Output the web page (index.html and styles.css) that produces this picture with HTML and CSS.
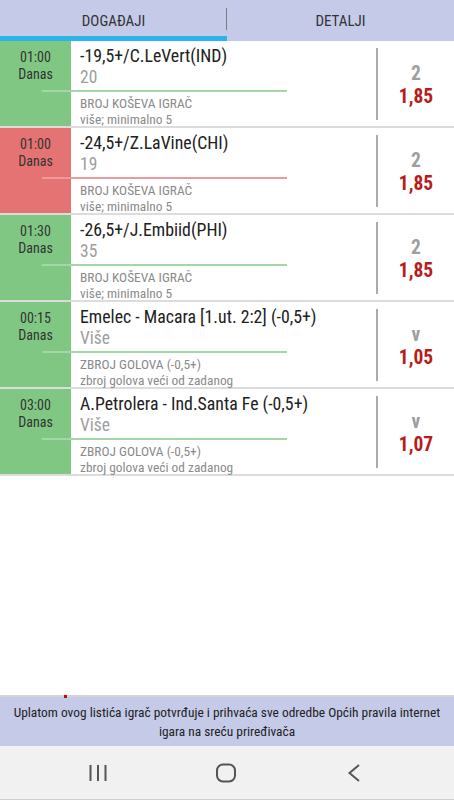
FILE: index.html
```html
<!DOCTYPE html>
<html lang="hr">
<head>
    <meta charset="UTF-8">
    <meta name="viewport" content="width=device-width, initial-scale=1.0">
    <title>Listić</title>
    <link rel="stylesheet" href="styles.css">
</head>
<body>
    <div class="tabs">
        <div class="tab active">DOGAĐAJI</div>
        <div class="tab">DETALJI</div>
    </div>

    <div class="list">
        <div class="row win">
            <div class="time">01:00<br>Danas</div>
            <div class="info">
                <div class="title">-19,5+/C.LeVert(IND)</div>
                <div class="pick">20</div>
                <div class="rule"></div>
                <div class="market">BROJ KOŠEVA IGRAČ</div>
                <div class="desc">više; minimalno 5</div>
            </div>
            <div class="odds"><span class="tip">2</span><span class="quota">1,85</span></div>
        </div>

        <div class="row lose">
            <div class="time">01:00<br>Danas</div>
            <div class="info">
                <div class="title">-24,5+/Z.LaVine(CHI)</div>
                <div class="pick">19</div>
                <div class="rule"></div>
                <div class="market">BROJ KOŠEVA IGRAČ</div>
                <div class="desc">više; minimalno 5</div>
            </div>
            <div class="odds"><span class="tip">2</span><span class="quota">1,85</span></div>
        </div>

        <div class="row win">
            <div class="time">01:30<br>Danas</div>
            <div class="info">
                <div class="title">-26,5+/J.Embiid(PHI)</div>
                <div class="pick">35</div>
                <div class="rule"></div>
                <div class="market">BROJ KOŠEVA IGRAČ</div>
                <div class="desc">više; minimalno 5</div>
            </div>
            <div class="odds"><span class="tip">2</span><span class="quota">1,85</span></div>
        </div>

        <div class="row win">
            <div class="time">00:15<br>Danas</div>
            <div class="info">
                <div class="title">Emelec - Macara [1.ut. 2:2] (-0,5+)</div>
                <div class="pick">Više</div>
                <div class="rule"></div>
                <div class="market">ZBROJ GOLOVA (-0,5+)</div>
                <div class="desc">zbroj golova veći od zadanog</div>
            </div>
            <div class="odds"><span class="tip">v</span><span class="quota">1,05</span></div>
        </div>

        <div class="row win">
            <div class="time">03:00<br>Danas</div>
            <div class="info">
                <div class="title">A.Petrolera - Ind.Santa Fe (-0,5+)</div>
                <div class="pick">Više</div>
                <div class="rule"></div>
                <div class="market">ZBROJ GOLOVA (-0,5+)</div>
                <div class="desc">zbroj golova veći od zadanog</div>
            </div>
            <div class="odds"><span class="tip">v</span><span class="quota">1,07</span></div>
        </div>
    </div>

    <div class="notice">
        <span class="dot"></span>
        Uplatom ovog listića igrač potvrđuje i prihvaća sve odredbe Općih pravila internet igara na sreću priređivača
    </div>

    <div class="navbar">
        <svg width="34" height="20" viewBox="0 0 34 20"><path d="M9.5 2v16M17 2v16M24.5 2v16" stroke="#555" stroke-width="2" fill="none"/></svg>
        <svg width="34" height="20" viewBox="0 0 34 20"><rect x="8" y="1.5" width="18" height="17" rx="6" stroke="#555" stroke-width="2" fill="none"/></svg>
        <svg width="34" height="20" viewBox="0 0 34 20"><path d="M22 2l-9.5 8 9.5 8" stroke="#555" stroke-width="2" fill="none"/></svg>
    </div>
</body>
</html>
```

FILE: styles.css
```css
body {
    margin: 0;
    height: 800px;
    display: flex;
    flex-direction: column;
    font-family: Roboto, "Noto Sans", sans-serif;
    font-stretch: 86%;
    background: #fff;
    color: #212121;
}

.tabs {
    display: flex;
    height: 41px;
    background: #c5cae9;
}

.tab {
    flex: 1;
    text-align: center;
    font-size: 15px;
    line-height: 36px;
    padding-top: 3px;
    color: #333;
    position: relative;
}

.tab.active {
    border-bottom: 5px solid #2ab4e8;
    height: 33px;
}

/* divider between the two tabs */
.tab.active::after {
    content: "";
    position: absolute;
    right: 0;
    top: 8px;
    height: 22px;
    border-right: 1.5px solid #7a7a7a;
}

.list {
    flex: 1;
}

.row {
    display: flex;
    height: 85px;
    border-bottom: 2px solid #dcdcdc;
}

.time {
    width: 71px;
    flex-shrink: 0;
    text-align: center;
    font-size: 14px;
    line-height: 17px;
    padding-top: 8px;
    color: #333;
}

.win .time { background: #81c784; }
.lose .time { background: #e57373; }

.info {
    flex: 1;
    padding: 5px 0 0 9px;
    min-width: 0;
}

.title {
    font-size: 17.8px;
    line-height: 20px;
    white-space: nowrap;
}

.pick {
    font-size: 17.5px;
    line-height: 22px;
    color: #9e9e9e;
}

.rule {
    height: 2px;
    width: 245px;
    margin: 2px 0 0 -38px;
}

.win .rule { background: #a5d6a7; }
.lose .rule { background: #ef9a9a; }

.market,
.desc {
    font-size: 13.4px;
    line-height: 16.5px;
    color: #8a8a8a;
}

.market {
    margin-top: 3.5px;
}

.odds {
    width: 76px;
    flex-shrink: 0;
    margin: 7px 0 6px;
    border-left: 2px solid #ababab;
    padding-top: 14px;
    display: flex;
    flex-direction: column;
    align-items: center;
    font-weight: bold;
    font-size: 19.5px;
    line-height: 23px;
}

.tip { color: #9e9e9e; }
.quota { color: #b71c1c; }

.notice {
    position: relative;
    border-top: 2px solid #d4d4d4;
    background: #c5cae9;
    text-align: center;
    font-size: 13.4px;
    line-height: 19px;
    padding: 6px 6px 5px;
    color: #222;
}

.dot {
    position: absolute;
    left: 64px;
    top: -2px;
    width: 3px;
    height: 3px;
    background: #d50000;
}

.navbar {
    height: 53px;
    background: #f1f1f1;
    border-bottom: 1px solid #cfcfcf;
    display: flex;
    align-items: center;
    gap: 94px;
    padding-left: 81px;
}
```
